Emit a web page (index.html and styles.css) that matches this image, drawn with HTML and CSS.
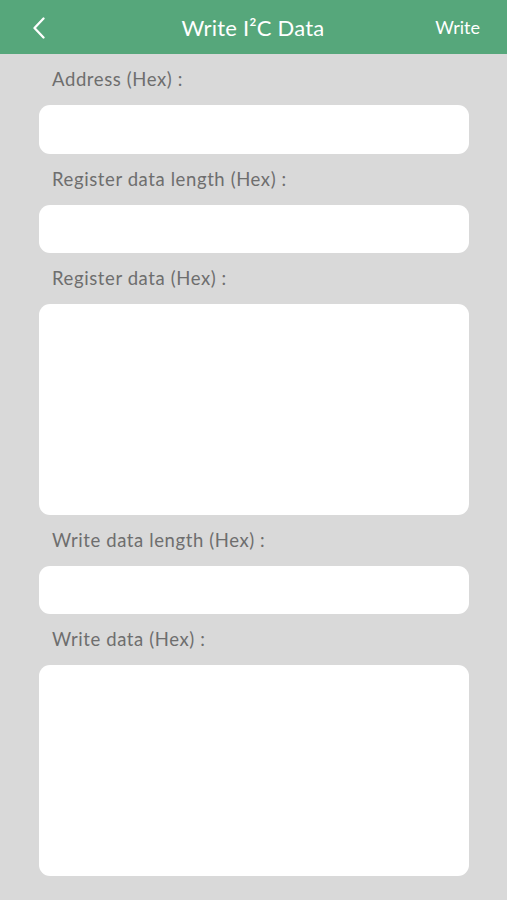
FILE: index.html
```html
<!DOCTYPE html>
<html>
<head>
<meta charset="utf-8">
<link rel="stylesheet" href="styles.css">
</head>
<body>
<header class="navbar">
  <button class="nav-back" aria-label="Back">
    <svg width="14" height="22" viewBox="0 0 14 22"><path d="M11.5 1.5 L2.5 11 L11.5 20.5" fill="none" stroke="#fff" stroke-width="2.3" stroke-linecap="round" stroke-linejoin="round"/></svg>
  </button>
  <h1 class="nav-title">Write I²C Data</h1>
  <button class="nav-action">Write</button>
</header>
<main class="form">
  <label class="field-label">Address (Hex) :</label>
  <div class="field field-first"></div>
  <label class="field-label">Register data length (Hex) :</label>
  <div class="field"></div>
  <label class="field-label">Register data (Hex) :</label>
  <div class="field field-area"></div>
  <label class="field-label">Write data length (Hex) :</label>
  <div class="field"></div>
  <label class="field-label">Write data (Hex) :</label>
  <div class="field field-area"></div>
</main>
</body>
</html>
```

FILE: styles.css
```css
html, body {
  margin: 0;
  padding: 0;
}
body {
  width: 507px;
  height: 900px;
  background: #d9d9d9;
  font-family: Lato, "Open Sans", sans-serif;
  overflow: hidden;
}
.navbar {
  height: 54px;
  background: #56a77b;
  display: grid;
  grid-template-columns: 100px 1fr 100px;
  align-items: center;
}
.nav-back {
  background: none;
  border: 0;
  padding: 0 0 0 32px;
  height: 54px;
  display: flex;
  align-items: center;
  justify-self: start;
}
.nav-back svg {
  display: block;
  margin-top: 1px;
}
.nav-title {
  margin: 0;
  text-align: center;
  color: #fff;
  font-weight: 400;
  font-size: 22px;
  letter-spacing: 0.2px;
  padding-right: 1px;
}
.nav-action {
  background: none;
  border: 0;
  padding: 0 27px 0 0;
  justify-self: end;
  color: #fff;
  font-family: inherit;
  font-size: 18px;
  font-weight: 400;
}
.form {
  display: flex;
  flex-direction: column;
  padding: 0 38px 0 39px;
}
.field-label {
  height: 51px;
  display: flex;
  align-items: center;
  padding-left: 13px;
  color: #6e6e6e;
  font-size: 18.5px;
  letter-spacing: 0.6px;
  box-sizing: border-box;
  padding-bottom: 1px;
}
.field {
  height: 48px;
  background: #fff;
  border-radius: 11px;
}
.field-first {
  height: 49px;
}
.field-area {
  height: 211px;
}
```
